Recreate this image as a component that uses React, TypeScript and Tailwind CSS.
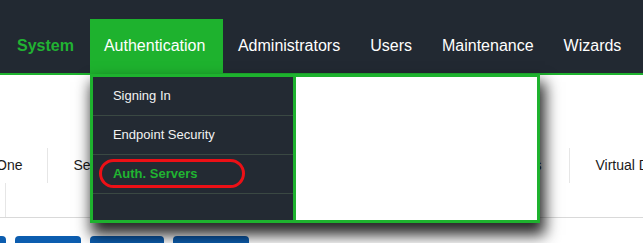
import { useState } from 'react'

const navItems = ['Administrators', 'Users', 'Maintenance', 'Wizards']
const menuItems = ['Signing In', 'Endpoint Security', 'Auth. Servers']

export default function App() {
  const [active] = useState('Auth. Servers')

  return (
    <div className="relative h-[243px] w-full overflow-hidden bg-white font-['Liberation_Sans',Arial,sans-serif]">
      <nav className="flex h-[75px] items-end border-b-2 border-[#1eb22e] bg-[#222932] pl-[3px] text-[16px] text-white">
        <div className="mr-[2px] flex h-[54px] items-center px-[14px] font-bold text-[#21b232]">System</div>
        <div className="relative flex h-[54px] w-[133px] items-center bg-[#1eb22e] pl-[14px]">
          Authentication
          <div className="absolute left-0 top-[55px] z-10 flex h-[149px] w-[450px] border-[3px] border-[#1eb22e] bg-[#1eb22e] shadow-[3px_10px_14px_2px_rgba(0,0,0,0.85)]">
            <div className="relative w-[200px] bg-[#232a33] text-[13px]">
              {menuItems.map((item) => (
                <div
                  key={item}
                  className={`flex h-[39px] items-center border-b border-[#3a4843] pl-[20px] ${
                    item === active ? 'font-bold text-[#20b431]' : 'text-[#f2f2f2]'
                  }`}
                >
                  {item}
                </div>
              ))}
              <div className="absolute left-[6px] top-[82px] h-[29px] w-[146px] rounded-full border-[3px] border-[#ec1016]" />
            </div>
            <div className="ml-[3px] flex-1 bg-white" />
          </div>
        </div>
        {navItems.map((item) => (
          <div key={item} className="flex h-[54px] items-center px-[15px]">
            {item}
          </div>
        ))}
      </nav>

      <div className="mt-[73px] flex h-[35px] items-center whitespace-nowrap text-[14px] text-[#1a1a1a]">
        <div className="-ml-[4px] shrink-0 pr-[25px]">One</div>
        <div className="flex h-full w-[260px] shrink-0 items-center border-l border-[#e6e6e6] pl-[25px]">Security</div>
        <div className="flex h-full w-[262px] shrink-0 items-center justify-end pr-[28px]">Certificates</div>
        <div className="flex h-full shrink-0 items-center border-l border-[#e6e6e6] pl-[25px]">Virtual Devices</div>
      </div>
      <div className="h-[35px] border-b border-[#d9d9d9]">
        <div className="ml-[5px] h-full border-l border-[#e6e6e6]" />
      </div>

      <div className="mt-[18px] flex gap-[9px] -ml-[60px]">
        {[66, 66, 74, 76].map((w, i) => (
          <div key={i} className="h-[20px] shrink-0 rounded-t-[4px] bg-[#0c5daf]" style={{ width: w }} />
        ))}
      </div>
    </div>
  )
}
